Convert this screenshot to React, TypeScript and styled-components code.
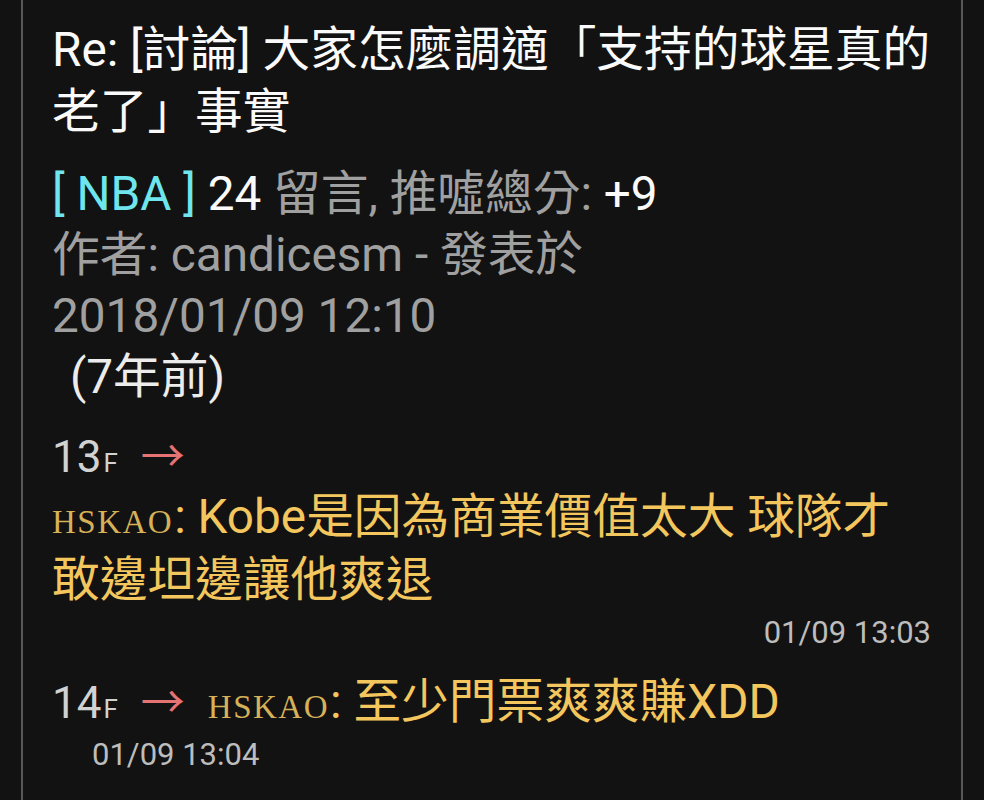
import styled, { createGlobalStyle } from 'styled-components';

type Push = {
  floor: number;
  author: string;
  content: string;
  time: string;
  timeAlign: 'left' | 'right';
};

const pushes: Push[] = [
  {
    floor: 13,
    author: 'HSKAO',
    content: 'Kobe是因為商業價值太大 球隊才敢邊坦邊讓他爽退',
    time: '01/09 13:03',
    timeAlign: 'right',
  },
  {
    floor: 14,
    author: 'HSKAO',
    content: '至少門票爽爽賺XDD',
    time: '01/09 13:04',
    timeAlign: 'left',
  },
];

export default function App(): JSX.Element {
  return (
    <>
      <GlobalStyle />
      <Frame>
        <Title>Re: [討論] 大家怎麼調適「支持的球星真的老了」事實</Title>
        <Meta>
          <MetaLine>
            <Board>[ NBA ]</Board> <Strong>24</Strong> 留言, 推噓總分: <Strong>+9</Strong>
          </MetaLine>
          <MetaLine>作者: candicesm - 發表於</MetaLine>
          <MetaLine>2018/01/09 12:10</MetaLine>
          <Ago>(7年前)</Ago>
        </Meta>
        {pushes.map((push) => (
          <PushItem key={push.floor}>
            <PushHead>
              <Floor>
                {push.floor}
                <FloorMark>F</FloorMark>
              </Floor>
              <Arrow>→</Arrow>
              <PushBody>
                <Author>{push.author}</Author>: {push.content}
              </PushBody>
            </PushHead>
            <PushTime align={push.timeAlign}>{push.time}</PushTime>
          </PushItem>
        ))}
      </Frame>
    </>
  );
}

const GlobalStyle = createGlobalStyle`
  html, body {
    margin: 0;
    padding: 0;
    background: #121212;
  }
  body {
    font-family: Roboto, "Noto Sans CJK TC", sans-serif;
    color: #a0a0a0;
  }
`;
const Frame = styled.div`
  box-sizing: border-box;
  margin-left: 21px;
  width: 942px;
  min-height: 100vh;
  padding: 19px 30px 0 29px;
  border-left: 2px solid #575757;
  border-right: 2px solid #575757;
`;
const Title = styled.h1`
  margin: 0;
  color: #fafafa;
  font-size: 47.7px;
  font-weight: 400;
  line-height: 62px;
`;
const Meta = styled.div`
  margin-top: 21px;
  font-size: 47.7px;
  line-height: 61px;
`;
const MetaLine = styled.div`
  color: #a0a0a0;
  white-space: nowrap;
`;
const Board = styled.span`
  color: #6fe6ee;
`;
const Strong = styled.span`
  color: #fafafa;
`;
const Ago = styled.div`
  padding-left: 18px;
  color: #ececec;
`;
const PushItem = styled.div`
  margin-top: 25px;
  &:nth-of-type(n + 2) {
    margin-top: 16px;
  }
`;
const PushHead = styled.div`
  display: flex;
  flex-wrap: wrap;
  align-items: baseline;
  column-gap: 23px;
`;
const Floor = styled.span`
  color: #d2d2d2;
  font-size: 44px;
  line-height: 58px;
`;
const FloorMark = styled.span`
  margin-left: 2px;
  font-size: 26px;
  line-height: 1;
`;
const Arrow = styled.span`
  color: #e57373;
  font-family: "Noto Sans CJK TC", sans-serif;
  font-size: 44px;
  line-height: 58px;
`;
const PushBody = styled.div`
  color: #f3c65e;
  font-size: 47.7px;
  line-height: 63px;
`;
const Author = styled.span`
  margin-right: 1px;
  color: #d6b158;
  font-family: "Liberation Serif", serif;
  font-size: 33px;
  letter-spacing: 1.5px;
  line-height: 1;
`;
const PushTime = styled.div<{ align: 'left' | 'right' }>`
  padding-left: ${({ align }) => (align === 'left' ? '40px' : '0')};
  text-align: ${({ align }) => align};
  color: #bdbdbd;
  font-size: 31px;
  line-height: 42px;
`;
